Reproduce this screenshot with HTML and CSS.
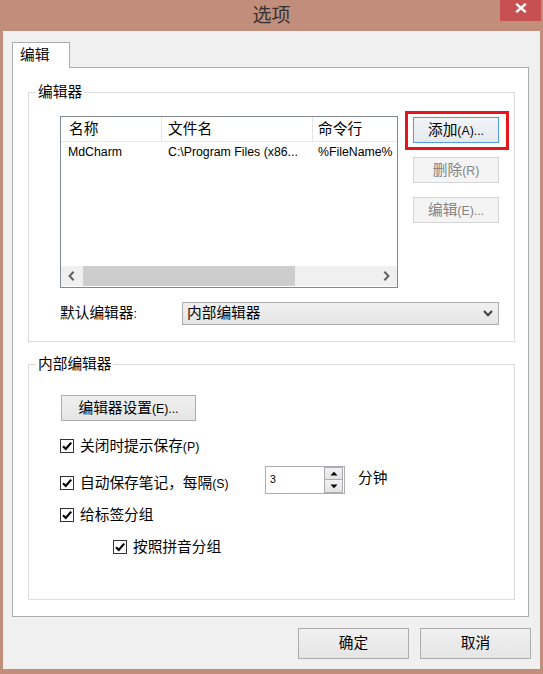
FILE: index.html
```html
<!DOCTYPE html>
<html lang="zh-CN">
<head>
<meta charset="utf-8">
<title>选项</title>
<link rel="stylesheet" href="styles.css">
</head>
<body>
<div class="window">
  <div class="titlebar">
    <div></div>
    <div class="title">选项</div>
    <div class="tb-right">
      <button class="close" aria-label="关闭"><svg width="12" height="10" viewBox="0 0 12 10"><path d="M1.2 0.8 L10.8 9.2 M10.8 0.8 L1.2 9.2" stroke="#fff" stroke-width="2.4" fill="none"/></svg></button>
    </div>
  </div>
  <div class="client">
    <div class="tabs"><div class="tab">编辑</div></div>
    <div class="panel">
      <div class="group g1">
        <div class="gtitle">编辑器</div>
        <div class="g1-main">
          <div class="list">
            <div class="lhead">
              <div class="c c1">名称</div>
              <div class="c c2">文件名</div>
              <div class="c c3">命令行</div>
            </div>
            <div class="lrow">
              <div class="c c1 l">MdCharm</div>
              <div class="c c2 l">C:\Program Files (x86...</div>
              <div class="c c3 l">%FileName%</div>
            </div>
            <div class="hscroll">
              <div class="sbtn"><svg width="7" height="10" viewBox="0 0 7 10"><path d="M5.6 0.8 L1.6 5 L5.6 9.2" stroke="#606060" stroke-width="2" fill="none"/></svg></div>
              <div class="thumb"></div>
              <div class="track"></div>
              <div class="sbtn"><svg width="7" height="10" viewBox="0 0 7 10"><path d="M1.4 0.8 L5.4 5 L1.4 9.2" stroke="#606060" stroke-width="2" fill="none"/></svg></div>
            </div>
          </div>
          <div class="btncol">
            <div class="hl"><button class="btn default">添加<span class="l">(A)...</span></button></div>
            <button class="btn" disabled>删除<span class="l">(R)</span></button>
            <button class="btn" disabled>编辑<span class="l">(E)...</span></button>
          </div>
        </div>
        <div class="combo-row">
          <div class="clabel">默认编辑器<span class="l">:</span></div>
          <div class="combo">
            <span class="ctext">内部编辑器</span>
            <svg width="10" height="7" viewBox="0 0 10 7"><path d="M1 1 L5 5.2 L9 1" stroke="#404040" stroke-width="2" fill="none"/></svg>
          </div>
        </div>
      </div>

      <div class="group g2">
        <div class="gtitle">内部编辑器</div>
        <button class="btn wide">编辑器设置<span class="l">(E)...</span></button>
        <div class="row r1">
          <div class="cb"><span class="box"><svg width="12" height="12" viewBox="0 0 12 12"><path d="M2 6.2 L4.8 9 L10.2 2.6" stroke="#000" stroke-width="2.2" fill="none"/></svg></span><span>关闭时提示保存<span class="l">(P)</span></span></div>
        </div>
        <div class="row r2">
          <div class="cb fixed"><span class="box"><svg width="12" height="12" viewBox="0 0 12 12"><path d="M2 6.2 L4.8 9 L10.2 2.6" stroke="#000" stroke-width="2.2" fill="none"/></svg></span><span>自动保存笔记，每隔<span class="l">(S)</span></span></div>
          <div class="spin">
            <div class="sval l">3</div>
            <div class="sbtns">
              <div class="sb up"><svg width="8" height="5" viewBox="0 0 8 5"><path d="M0.5 4.5 L4 0.8 L7.5 4.5 Z" fill="#000"/></svg></div>
              <div class="sb down"><svg width="8" height="5" viewBox="0 0 8 5"><path d="M0.5 0.5 L4 4.2 L7.5 0.5 Z" fill="#000"/></svg></div>
            </div>
          </div>
          <div class="unit">分钟</div>
        </div>
        <div class="row r3">
          <div class="cb"><span class="box"><svg width="12" height="12" viewBox="0 0 12 12"><path d="M2 6.2 L4.8 9 L10.2 2.6" stroke="#000" stroke-width="2.2" fill="none"/></svg></span><span>给标签分组</span></div>
        </div>
        <div class="row r4">
          <div class="cb"><span class="box"><svg width="12" height="12" viewBox="0 0 12 12"><path d="M2 6.2 L4.8 9 L10.2 2.6" stroke="#000" stroke-width="2.2" fill="none"/></svg></span><span>按照拼音分组</span></div>
        </div>
      </div>
    </div>
    <div class="footer">
      <button class="btn big">确定</button>
      <button class="btn big">取消</button>
    </div>
  </div>
</div>
</body>
</html>
```

FILE: styles.css
```css
* { box-sizing: border-box; }
html, body { margin: 0; padding: 0; }
body {
  width: 543px;
  height: 674px;
  overflow: hidden;
  background: #c28e7c;
  font-family: "Liberation Sans", "Noto Sans CJK SC", sans-serif;
  font-size: 14.7px;
  color: #000;
}
.l { font-size: 12.3px; }

.window {
  width: 543px;
  height: 674px;
  display: flex;
  flex-direction: column;
  background: #c28e7c;
}

.titlebar {
  height: 31px;
  flex-shrink: 0;
  display: grid;
  grid-template-columns: 1fr auto 1fr;
  align-items: start;
}
.title {
  font-family: "Noto Sans CJK SC", sans-serif;
  font-size: 19px;
  line-height: 27px;
  color: #333;
}
.tb-right { display: flex; justify-content: flex-end; padding-right: 2px; }
.close {
  width: 41px;
  height: 21px;
  background: #c75050;
  border: 0;
  padding: 3px 0 0 0;
  display: flex;
  justify-content: center;
  align-items: flex-start;
}

.client {
  margin: 0 3px;
  height: 638px;
  background: #f0f0f0;
  padding: 11px 9px 0 9px;
}

.tabs { display: flex; }
.tab {
  position: relative;
  z-index: 1;
  width: 58px;
  height: 26px;
  margin-bottom: -1px;
  background: #fff;
  border: 1px solid #adadad;
  border-bottom: 0;
  padding-left: 7px;
  line-height: 25px;
}

.panel {
  height: 550px;
  margin-right: 2px;
  background: #fff;
  border: 1px solid #adadad;
  padding: 0 13px 0 15px;
}

.group {
  border: 1px solid #dcdcdc;
  padding: 0 15px 16px 31px;
}
.g1 { margin-top: 24px; }
.g2 { margin-top: 22px; height: 236px; }
.gtitle {
  width: fit-content;
  margin-top: -9px;
  margin-left: -24px;
  padding: 0 2px;
  background: #fff;
  line-height: 17px;
}

.g1-main {
  display: flex;
  gap: 15px;
  margin-top: 15px;
}
.list {
  width: 338px;
  height: 172px;
  border: 1px solid #828790;
  background: #fff;
  display: flex;
  flex-direction: column;
}
.lhead {
  display: flex;
  height: 25px;
  border-bottom: 1px solid #e8e8e8;
  line-height: 24px;
}
.lhead .c { border-right: 1px solid #e5e5e5; }
.lhead .c3 { border-right: 0; }
.c { white-space: nowrap; overflow: hidden; flex-shrink: 0; }
.c1 { width: 101px; padding-left: 8px; }
.c2 { width: 151px; padding-left: 6px; }
.c3 { flex: 1; padding-left: 5px; }
.lrow { display: flex; height: 21px; line-height: 21px; }
.lrow .c1 { padding-left: 7px; }

.hscroll {
  margin-top: auto;
  margin-bottom: 1px;
  height: 20px;
  background: #f0f0f0;
  display: flex;
  align-items: stretch;
}
.sbtn {
  width: 21px;
  display: flex;
  align-items: center;
  justify-content: center;
  flex-shrink: 0;
}
.thumb { width: 212px; margin-left: 1px; background: #cdcdcd; }
.track { flex: 1; }

.btncol {
  width: 86px;
  display: flex;
  flex-direction: column;
  gap: 14px;
  padding-top: 1px;
}
.hl { position: relative; height: 26px; }
.hl::after {
  content: "";
  position: absolute;
  left: -8px;
  right: -10px;
  top: -6px;
  bottom: -7px;
  border: 3px solid #e8141c;
  pointer-events: none;
}
.btn {
  display: block;
  width: 86px;
  height: 26px;
  border: 1px solid #adadad;
  background: linear-gradient(#f0f0f0, #e5e5e5);
  font: inherit;
  color: #000;
  padding: 0;
  line-height: 24px;
  text-align: center;
  white-space: nowrap;
}
.btn.default { border-color: #4f9ee6; background: linear-gradient(#f2f4f7, #e6e9ee); }
.btn:disabled {
  border-color: #d6d6d6;
  background: #f4f4f4;
  color: #838383;
}

.combo-row {
  display: flex;
  align-items: center;
  margin-top: 14px;
}
.clabel { width: 122px; line-height: 20px; }
.combo {
  width: 317px;
  height: 23px;
  border: 1px solid #acacac;
  background: linear-gradient(#f0f0f0, #e5e5e5);
  display: flex;
  align-items: center;
  justify-content: space-between;
  padding: 0 5px 0 4px;
  line-height: 21px;
}

.btn.wide { width: 135px; margin-top: 22px; margin-left: 1px; }

.row { display: flex; }
.r1 { margin-top: 15px; height: 20px; }
.r2 { margin-top: 10px; height: 28px; align-items: flex-start; }
.r2 .cb { margin-top: 7px; }
.r3 { margin-top: 11px; height: 20px; }
.r4 { margin-top: 12px; height: 20px; padding-left: 53px; }

.cb {
  display: flex;
  align-items: center;
  gap: 6px;
  height: 20px;
  line-height: 20px;
  white-space: nowrap;
}
.cb.fixed { width: 205px; }
.box {
  width: 14px;
  height: 14px;
  border: 1px solid #333;
  background: #fff;
  flex-shrink: 0;
  display: flex;
  align-items: center;
  justify-content: center;
}

.spin {
  width: 80px;
  height: 28px;
  border: 1px solid #abadb3;
  background: #fff;
  display: flex;
  justify-content: space-between;
}
.sval { font-size: 10.5px; padding: 6px 0 0 4px; line-height: 12px; }
.sbtns {
  width: 19px;
  margin-right: 1px;
  display: flex;
  flex-direction: column;
  gap: 0;
}
.sb {
  border: 1px solid #acacac;
  background: linear-gradient(#f2f2f2, #e3e3e3);
  display: flex;
  align-items: center;
  justify-content: center;
}
.sb.up { height: 13px; }
.sb.down { height: 13px; border-top: 0; }
.unit { margin-left: 13px; line-height: 24px; }

.footer {
  display: flex;
  justify-content: flex-end;
  gap: 11px;
  margin-top: 11px;
}
.btn.big { width: 111px; height: 31px; line-height: 29px; }
```
